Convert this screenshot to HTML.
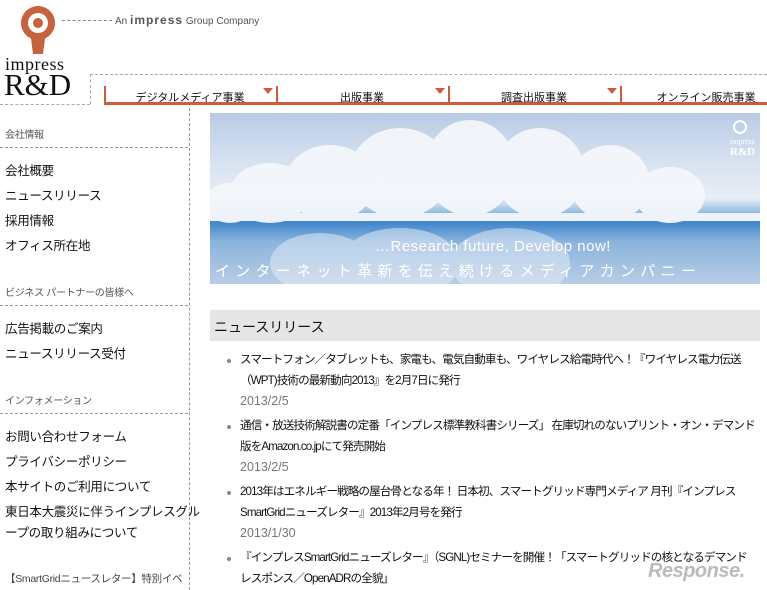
<!DOCTYPE html>
<html><head><meta charset="utf-8"><style>
body{margin:0;width:767px;height:590px;overflow:hidden;background:#fff;font-family:"Liberation Sans","Noto Sans CJK JP",sans-serif;color:#111;position:relative}
.a{position:absolute}
.side div{position:absolute;left:5px;font-size:12.5px;white-space:nowrap;letter-spacing:-0.3px}
.side .h{font-size:10px;color:#555}
.side .l{position:absolute;left:0;width:188px;border-top:1px dashed #999;height:0}
.nav{font-size:11px;text-align:center;width:172px;top:89px}
.tri{width:0;height:0;border-left:5px solid transparent;border-right:5px solid transparent;border-top:6px solid #d05a3a;top:88px}
.vs{width:2px;background:#d05a3a;top:86px;height:18px}
.news{font-size:11.6px;line-height:20.5px;left:240px;white-space:nowrap;letter-spacing:-0.9px}
.d{color:#777;font-size:12.5px;letter-spacing:0}
.dot{width:4px;height:4px;border-radius:2px;background:#888;left:227px}
</style></head><body>
<svg class="a" style="left:18px;top:5px" width="40" height="50" viewBox="0 0 40 50">
<path d="M20 1a17 17 0 0 0-7 32.5L15 49h10l2-15.5A17 17 0 0 0 20 1z" fill="#c8613d"/>
<circle cx="20" cy="18" r="10" fill="#fff"/><circle cx="20" cy="18" r="5" fill="#c8613d"/>
</svg>
<div class="a" style="left:5px;top:55px;font-family:'Liberation Serif',serif;font-size:18px;line-height:18px;letter-spacing:0.5px">impress</div>
<div class="a" style="left:4px;top:71px;font-family:'Liberation Serif',serif;font-size:31px;line-height:28px">R&amp;D</div>
<div class="a" style="left:62px;top:20px;width:50px;border-top:1px dashed #888"></div>
<div class="a" style="left:115px;top:13px;font-size:10px;color:#555">An <b style="font-size:12px;letter-spacing:1px">impress</b> Group Company</div>
<div class="a" style="left:90px;top:74px;width:677px;border-top:1px dashed #aaa"></div>
<div class="a" style="left:0;top:104px;width:90px;border-top:1px dashed #aaa"></div>
<div class="a" style="left:90px;top:74px;height:30px;border-left:1px dashed #aaa"></div>
<div class="a" style="left:104px;top:102px;width:663px;height:3px;background:#d05a3a"></div>
<div class="a vs" style="left:104px"></div><div class="a vs" style="left:276px"></div><div class="a vs" style="left:448px"></div><div class="a vs" style="left:620px"></div>
<div class="a nav" style="left:104px">デジタルメディア事業</div>
<div class="a nav" style="left:276px">出版事業</div>
<div class="a nav" style="left:448px">調査出版事業</div>
<div class="a nav" style="left:620px">オンライン販売事業</div>
<div class="a tri" style="left:263px"></div><div class="a tri" style="left:435px"></div><div class="a tri" style="left:607px"></div>
<div class="a" style="left:189px;top:108px;height:482px;border-left:1px dashed #999"></div>
<div class="side">
<div class="h" style="top:126px">会社情報</div><span class="l" style="top:147px"></span>
<div style="top:160px">会社概要</div><div style="top:185px">ニュースリリース</div><div style="top:210px">採用情報</div><div style="top:235px">オフィス所在地</div>
<div class="h" style="top:284px">ビジネス パートナーの皆様へ</div><span class="l" style="top:305px"></span>
<div style="top:318px">広告掲載のご案内</div><div style="top:343px">ニュースリリース受付</div>
<div class="h" style="top:392px">インフォメーション</div><span class="l" style="top:413px"></span>
<div style="top:426px">お問い合わせフォーム</div><div style="top:451px">プライバシーポリシー</div><div style="top:476px">本サイトのご利用について</div><div style="top:501px">東日本大震災に伴うインプレスグル</div><div style="top:522px">ープの取り組みについて</div>
<div style="top:571px;font-size:10.5px;color:#444">【SmartGridニュースレター】特別イベ</div>
</div>
<div class="a" style="left:210px;top:113px;width:550px;height:171px;overflow:hidden;background:linear-gradient(#b8cbe6 0%,#d8e3f0 30%,#e8eef6 50%,#6aa6dc 62%,#3f86cc 64%,#8ab4dc 75%,#b8cde6 100%)">
<svg width="550" height="171" style="position:absolute;left:0;top:0">
<g fill="#f4f7fb" opacity="0.95">
<ellipse cx="60" cy="80" rx="40" ry="30"/><ellipse cx="120" cy="70" rx="45" ry="38"/><ellipse cx="190" cy="60" rx="50" ry="45"/><ellipse cx="260" cy="55" rx="45" ry="48"/><ellipse cx="330" cy="60" rx="45" ry="45"/><ellipse cx="400" cy="70" rx="40" ry="38"/><ellipse cx="460" cy="82" rx="35" ry="28"/><ellipse cx="20" cy="90" rx="25" ry="20"/>
</g>
<rect x="0" y="100" width="550" height="8" fill="#eef3fa"/>
<g fill="#e8eef8" opacity="0.5"><ellipse cx="190" cy="150" rx="60" ry="35"/><ellipse cx="300" cy="150" rx="60" ry="35"/><ellipse cx="110" cy="150" rx="50" ry="30"/></g>
<circle cx="530" cy="14" r="6" fill="none" stroke="#fff" stroke-width="2"/>
</svg>
<div class="a" style="left:520px;top:24px;font-size:8px;color:#fff;font-family:'Liberation Serif',serif">impress<br><b style="font-size:11px">R&amp;D</b></div>
<div class="a" style="left:165px;top:125px;font-size:15px;color:#fff;letter-spacing:0.5px">…Research future, Develop now!</div>
<div class="a" style="left:5px;top:147px;font-size:15px;color:#fff;letter-spacing:5.3px">インターネット革新を伝え続けるメディアカンパニー</div>
</div>
<div class="a" style="left:210px;top:310px;width:550px;height:31px;background:#e6e6e6"></div>
<div class="a" style="left:214px;top:317px;font-size:14px">ニュースリリース</div>
<div class="a dot" style="top:359px"></div><div class="a dot" style="top:425px"></div><div class="a dot" style="top:491px"></div><div class="a dot" style="top:557px"></div>
<div class="a news" style="top:350px">スマートフォン／タブレットも、家電も、電気自動車も、ワイヤレス給電時代へ！『ワイヤレス電力伝送<br>（WPT)技術の最新動向2013』を2月7日に発行<br><span class="d">2013/2/5</span></div>
<div class="a news" style="top:416px">通信・放送技術解説書の定番「インプレス標準教科書シリーズ」 在庫切れのないプリント・オン・デマンド<br>版をAmazon.co.jpにて発売開始<br><span class="d">2013/2/5</span></div>
<div class="a news" style="top:482px">2013年はエネルギー戦略の屋台骨となる年！ 日本初、スマートグリッド専門メディア 月刊『インプレス<br>SmartGridニューズレター』2013年2月号を発行<br><span class="d">2013/1/30</span></div>
<div class="a news" style="top:548px">『インプレスSmartGridニューズレター』（SGNL)セミナーを開催！「スマートグリッドの核となるデマンド<br>レスポンス／OpenADRの全貌」</div>
<div class="a" style="left:648px;top:560px;font-size:20px;font-style:italic;color:#bbb;font-weight:bold;letter-spacing:-0.5px">Response.</div>
</body></html>
